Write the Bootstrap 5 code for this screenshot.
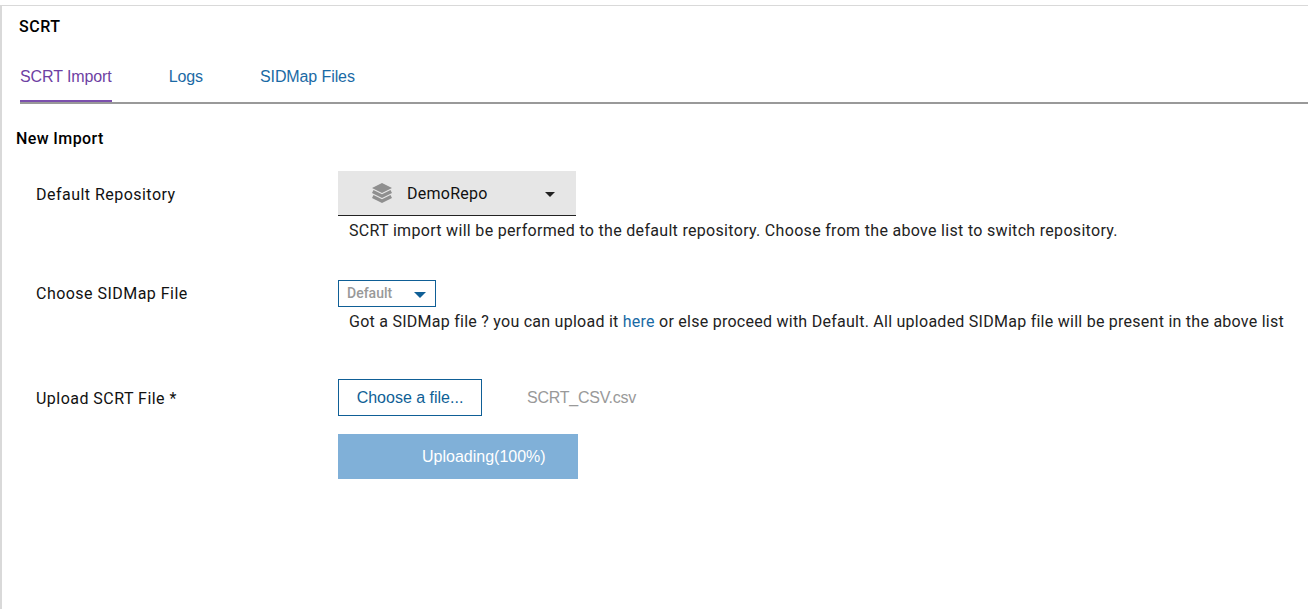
<!DOCTYPE html>
<html lang="en">
<head>
    <meta charset="UTF-8">
    <title>SCRT</title>
    <link href="https://cdn.jsdelivr.net/npm/bootstrap@5.3.0/dist/css/bootstrap.min.css" rel="stylesheet">
    <style>
        html, body {
            height: 100%;
            overflow: hidden;
        }
        body {
            font-family: Roboto, "Liberation Sans", sans-serif;
            font-size: 16px;
            color: #111;
            background: #fff;
        }
        #page {
            height: 609px;
            margin-top: 5px;
            border-top: 1px solid #d9d9d9;
            border-left: 2px solid #d9d9d9;
        }
        #pageTitle {
            font-size: 16px;
            font-weight: 500;
            line-height: 19px;
            letter-spacing: 0.5px;
            padding: 11px 0 0 17px;
            color: #000;
        }
        #scrtTabs {
            margin: 22px 0 0 18px;
            height: 46px;
            border-bottom: 2px solid #999;
            gap: 57px;
        }
        #scrtTabs a {
            display: block;
            height: 44px;
            padding-top: 9px;
            line-height: 19px;
            color: #1a6aa5;
            text-decoration: none;
            letter-spacing: -0.1px;
            font-family: "Liberation Sans", Arial, sans-serif;
        }
        #scrtTabs a.tab-on {
            color: #6e3fa3;
            border-bottom: 2px solid #7c50ad;
        }
        #newTitle {
            font-size: 16px;
            font-weight: 500;
            line-height: 19px;
            letter-spacing: 0.4px;
            margin: 25px 0 0 14px;
            color: #000;
        }
        .form-line {
            display: flex;
            padding-left: 34px;
        }
        .line-label {
            width: 302px;
            flex: none;
            line-height: 19px;
            letter-spacing: 0.47px;
        }
        .repo-pick {
            width: 238px;
            height: 45px;
            background: #e6e6e6;
            border-bottom: 1px solid #222;
            padding-left: 33px;
            gap: 14px;
            line-height: 19px;
            letter-spacing: 0.25px;
        }
        .repo-caret {
            margin-left: 43px;
            border-left: 5px solid transparent;
            border-right: 5px solid transparent;
            border-top: 5px solid #222;
            margin-top: 2px;
        }
        .line-help {
            line-height: 19px;
            padding-left: 11px;
            white-space: nowrap;
            color: #222;
        }
        .line-help a {
            color: #1a6aa5;
            text-decoration: none;
        }
        .sid-pick {
            width: 98px;
            height: 27px;
            border: 1px solid #0f5f96;
            padding-left: 8px;
            font-size: 14px;
            font-weight: 500;
            color: #999;
        }
        .sid-caret {
            margin-left: 22px;
            border-left: 6px solid transparent;
            border-right: 6px solid transparent;
            border-top: 6px solid #0f5f96;
            margin-top: 2px;
        }
        .file-btn {
            width: 144px;
            height: 37px;
            border: 1px solid #0f5f96;
            color: #0f5f96;
            font-family: "Liberation Sans", Arial, sans-serif;
        }
        .file-name {
            margin-left: 45px;
            color: #999;
            letter-spacing: -0.25px;
            font-family: "Liberation Sans", Arial, sans-serif;
        }
        .upload-btn {
            width: 240px;
            height: 45px;
            margin-top: 18px;
            padding-left: 84px;
            background: #80b0d8;
            color: #fff;
            font-family: "Liberation Sans", Arial, sans-serif;
        }
        #repoLine { margin-top: 23px; }
        #repoLabel { padding-top: 14px; }
        #repoHelp { margin-top: 5px; letter-spacing: 0.31px; }
        #sidLine { margin-top: 40px; }
        #sidLabel { padding-top: 4px; }
        #sidHelp { margin-top: 5px; letter-spacing: 0.255px; }
        #fileLine { margin-top: 48px; }
        #fileLabel { padding-top: 10px; }
    </style>
</head>
<body>
    <div id="page">
        <div id="pageTitle">SCRT</div>

        <!-- Tabs -->
        <nav id="scrtTabs" class="d-flex">
            <a class="tab-on" href="#">SCRT Import</a>
            <a href="#">Logs</a>
            <a href="#">SIDMap Files</a>
        </nav>

        <div id="newTitle">New Import</div>

        <!-- Default repository -->
        <div class="form-line" id="repoLine">
            <div class="line-label" id="repoLabel">Default Repository</div>
            <div>
                <div class="repo-pick d-flex align-items-center">
                    <svg width="22" height="21" viewBox="0 0 22 21">
                        <path d="M11 0 21 5 11 10 1 5Z" fill="#8f8f8f"/>
                        <path d="M2.5 7 11 11.2 19.5 7 21 10 11 15 1 10Z" fill="#8f8f8f"/>
                        <path d="M2.5 12 11 16.2 19.5 12 21 15 11 20 1 15Z" fill="#8f8f8f"/>
                    </svg>
                    <span>DemoRepo</span>
                    <span class="repo-caret"></span>
                </div>
                <div class="line-help" id="repoHelp">SCRT import will be performed to the default repository. Choose from the above list to switch repository.</div>
            </div>
        </div>

        <!-- SIDMap -->
        <div class="form-line" id="sidLine">
            <div class="line-label" id="sidLabel">Choose SIDMap File</div>
            <div>
                <div class="sid-pick d-flex align-items-center">
                    <span>Default</span>
                    <span class="sid-caret"></span>
                </div>
                <div class="line-help" id="sidHelp">Got a SIDMap file ? you can upload it <a href="#">here</a> or else proceed with Default. All uploaded SIDMap file will be present in the above list</div>
            </div>
        </div>

        <!-- Upload -->
        <div class="form-line" id="fileLine">
            <div class="line-label" id="fileLabel">Upload SCRT File *</div>
            <div>
                <div class="d-flex align-items-center">
                    <div class="file-btn d-flex align-items-center justify-content-center">Choose a file...</div>
                    <div class="file-name">SCRT_CSV.csv</div>
                </div>
                <div class="upload-btn d-flex align-items-center">Uploading(100%)</div>
            </div>
        </div>
    </div>

    <script src="https://cdn.jsdelivr.net/npm/bootstrap@5.3.0/dist/js/bootstrap.bundle.min.js"></script>
</body>
</html>
